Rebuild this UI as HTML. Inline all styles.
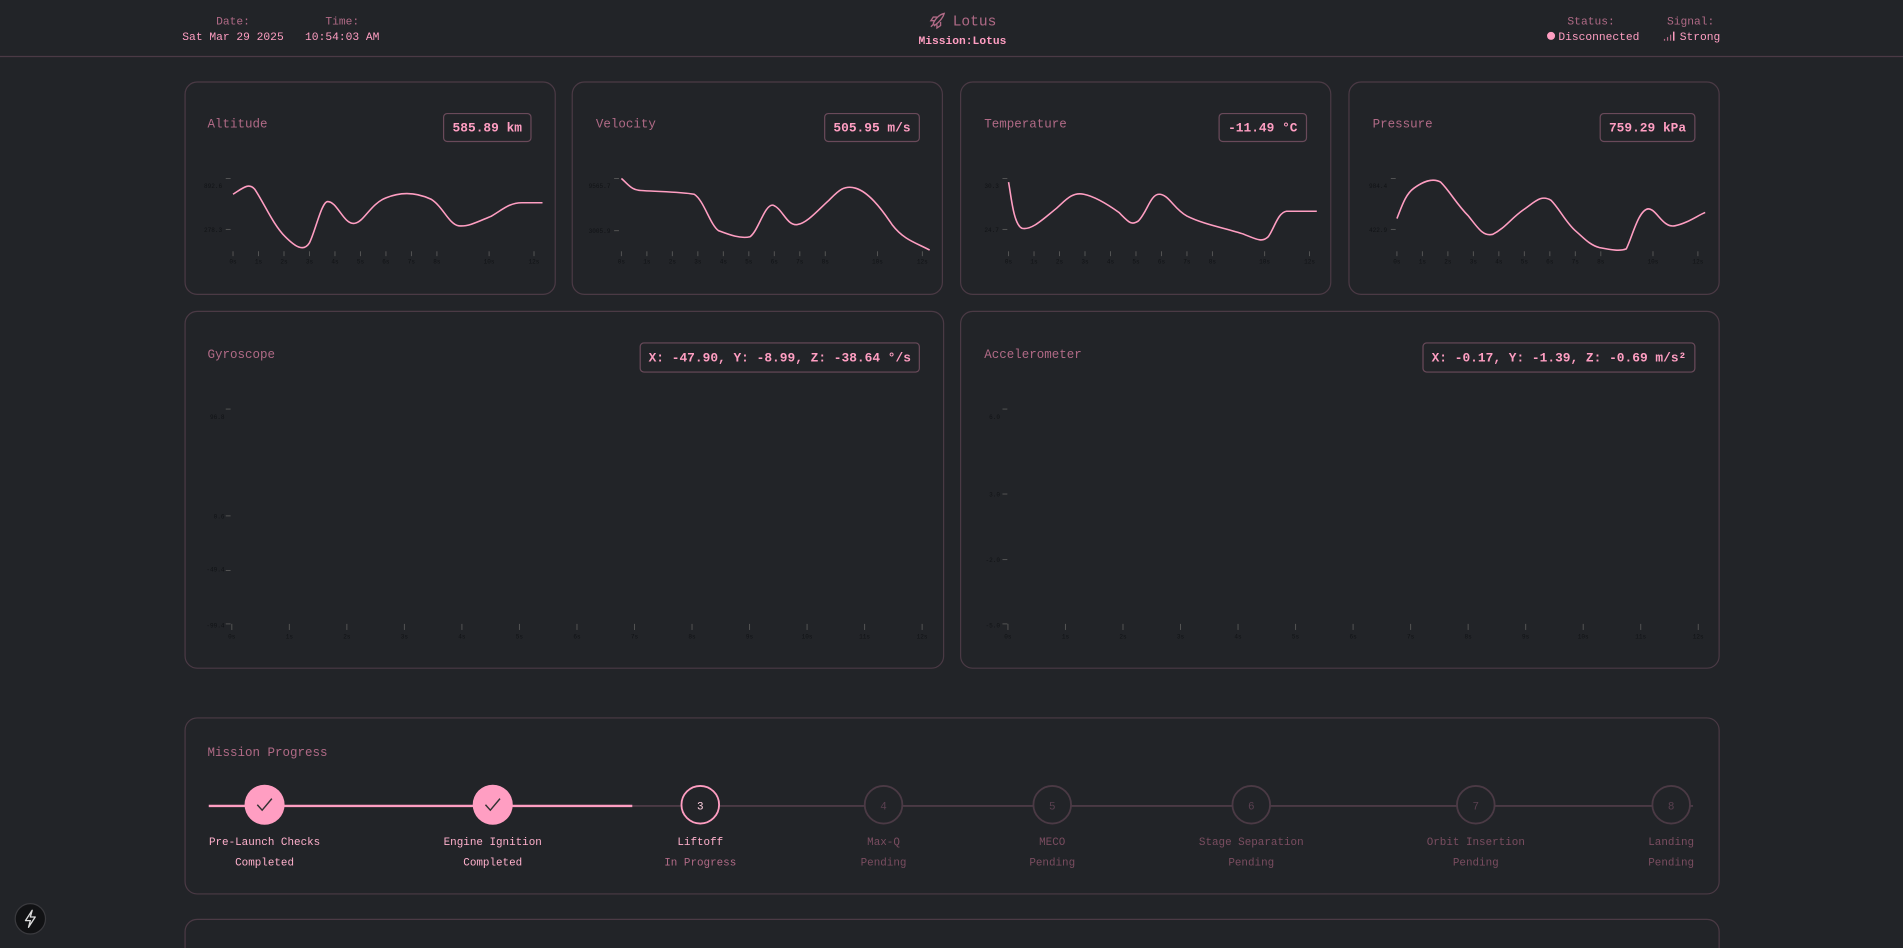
<!DOCTYPE html>
<html><head><meta charset="utf-8">
<style>
html,body{margin:0;padding:0;background:#222428;width:1903px;height:948px;overflow:hidden}
svg{display:block}
text{font-family:"Liberation Mono","DejaVu Sans Mono",monospace}
.lbl{fill:#b06a86;font-size:9.3px}
.val{fill:#ff9ec2;font-size:9.3px}
.card{fill:none;stroke:#4b3a45;stroke-width:1}
.title{fill:#b06a86;font-size:10.3px}
.box{fill:none;stroke:#6a4a5a;stroke-width:1}
.bv{fill:#ff9ec2;font-size:10.6px;font-weight:bold}
.ax{fill:#111316;font-size:5px}
.tk{stroke:#555;stroke-width:0.8}
.ln{fill:none;stroke:#ff9ec2;stroke-width:1.3}
.st{font-size:9px;text-anchor:middle}
</style></head><body>
<svg width="1903" height="948" viewBox="0 0 1568 781" xmlns="http://www.w3.org/2000/svg">
<rect width="1568" height="781" fill="#222428"/>
<!-- header -->
<text class="lbl" x="192" y="20" text-anchor="middle">Date:</text>
<text class="val" x="192" y="33" text-anchor="middle">Sat Mar 29 2025</text>
<text class="lbl" x="282" y="20" text-anchor="middle">Time:</text>
<text class="val" x="282" y="33" text-anchor="middle">10:54:03 AM</text>
<g transform="translate(766,10)" fill="none" stroke="#b06a86" stroke-width="1.1">
<path d="M3,9 C5,5 8,2 12,1 C11,5 8,8 4,11 Z"/><path d="M4,7 L1,7 L3,4 L6,4"/><path d="M6,10 L6,13 L9,11 L9,8"/><path d="M3,10 L1,12"/>
</g>
<text x="785" y="21" fill="#b06a86" font-size="12">Lotus</text>
<text class="val" x="793" y="36" text-anchor="middle" font-weight="bold">Mission:Lotus</text>
<text class="lbl" x="1311" y="20" text-anchor="middle">Status:</text>
<circle cx="1278" cy="29.5" r="3.3" fill="#ff9ec2"/>
<text class="val" x="1284" y="33">Disconnected</text>
<text class="lbl" x="1393" y="20" text-anchor="middle">Signal:</text>
<g fill="#b06a86"><rect x="1371" y="32" width="1" height="1.5"/><rect x="1373.5" y="30.5" width="1" height="3"/><rect x="1376" y="28.5" width="1" height="5"/><rect x="1378.5" y="26" width="1.2" height="7.5" fill="#ff9ec2"/></g>
<text class="val" x="1384" y="33">Strong</text>
<line x1="0" y1="46.5" x2="1568" y2="46.5" stroke="#4b3a45"/>

<!-- row 1 cards -->
<g id="c1">
<rect class="card" x="152.5" y="67.5" width="305" height="175" rx="10"/>
<text class="title" x="171" y="105">Altitude</text>
<rect class="box" x="365.5" y="93.5" width="72" height="23" rx="3"/>
<text class="bv" x="401.5" y="108.5" text-anchor="middle">585.89 km</text>
<line class="tk" x1="186" y1="147" x2="190" y2="147"/>
<text class="ax" x="183" y="155" text-anchor="end">892.6</text><line class="tk" x1="186" y1="189" x2="190" y2="189"/>
<text class="ax" x="183" y="191" text-anchor="end">278.3</text>
<path class="ln" d="M192,160 C200,155 205,150 210,156 C218,168 225,185 235,195 C243,203 250,208 255,200 C260,190 265,166 270,166 C278,166 283,185 292,184 C300,183 305,168 318,163 C330,158 342,158 355,164 C365,170 370,185 378,186 C386,187 395,182 405,178 C415,172 420,167 430,167 L447,167"/>
</g>
<rect class="card" x="471.5" y="67.5" width="305" height="175" rx="10"/>
<text class="title" x="491" y="105">Velocity</text>
<rect class="box" x="679.5" y="93.5" width="78" height="23" rx="3"/>
<text class="bv" x="718.5" y="108.5" text-anchor="middle">505.95 m/s</text>
<line class="tk" x1="506" y1="147" x2="510" y2="147"/>
<text class="ax" x="503" y="155" text-anchor="end">9565.7</text><line class="tk" x1="506" y1="190" x2="510" y2="190"/>
<text class="ax" x="503" y="192" text-anchor="end">3005.9</text>
<path class="ln" d="M512,147 C518,152 520,157 530,157 C545,158 560,158 572,160 C580,165 585,185 592,190 C600,193 610,197 618,195 C625,190 630,168 637,169 C645,172 648,186 657,185 C665,184 675,172 683,165 C690,158 695,152 705,155 C715,158 725,170 735,185 C745,198 755,200 766,206"/>

<rect class="card" x="791.5" y="67.5" width="305" height="175" rx="10"/>
<text class="title" x="811" y="105">Temperature</text>
<rect class="box" x="1004.5" y="93.5" width="72" height="23" rx="3"/>
<text class="bv" x="1040.5" y="108.5" text-anchor="middle">-11.49 °C</text>
<line class="tk" x1="826" y1="147" x2="830" y2="147"/>
<text class="ax" x="823" y="155" text-anchor="end">30.3</text><line class="tk" x1="826" y1="189" x2="830" y2="189"/>
<text class="ax" x="823" y="191" text-anchor="end">24.7</text>
<path class="ln" d="M831,150 C833,160 835,185 842,188 C850,190 860,180 870,172 C878,165 883,158 893,160 C903,162 915,170 922,175 C930,183 932,186 938,182 C945,175 948,160 955,160 C963,160 967,172 978,178 C992,185 1010,188 1025,193 C1035,197 1040,200 1045,195 C1050,188 1053,175 1060,174 L1085,174"/>

<rect class="card" x="1111.5" y="67.5" width="305" height="175" rx="10"/>
<text class="title" x="1131" y="105">Pressure</text>
<rect class="box" x="1318.5" y="93.5" width="78" height="23" rx="3"/>
<text class="bv" x="1357.5" y="108.5" text-anchor="middle">759.29 kPa</text>
<line class="tk" x1="1146" y1="147" x2="1150" y2="147"/>
<text class="ax" x="1143" y="155" text-anchor="end">984.4</text><line class="tk" x1="1146" y1="189" x2="1150" y2="189"/>
<text class="ax" x="1143" y="191" text-anchor="end">422.9</text>
<path class="ln" d="M1151,180 C1155,170 1158,160 1165,155 C1172,150 1180,146 1187,150 C1195,158 1200,168 1210,178 C1218,188 1222,195 1230,193 C1240,188 1245,180 1255,173 C1265,166 1270,160 1278,165 C1285,172 1290,183 1298,190 C1305,196 1310,202 1318,204 C1328,206 1335,207 1340,205 C1345,195 1350,173 1358,172 C1365,172 1370,188 1380,186 C1390,184 1398,178 1405,175"/>

<!-- small chart x axes -->
<g id="xa">
<g class="tk">
<line x1="192" y1="207" x2="192" y2="211"/><line x1="213" y1="207" x2="213" y2="211"/><line x1="234" y1="207" x2="234" y2="211"/><line x1="255" y1="207" x2="255" y2="211"/><line x1="276" y1="207" x2="276" y2="211"/><line x1="297" y1="207" x2="297" y2="211"/><line x1="318" y1="207" x2="318" y2="211"/><line x1="339" y1="207" x2="339" y2="211"/><line x1="360" y1="207" x2="360" y2="211"/><line x1="403" y1="207" x2="403" y2="211"/><line x1="440" y1="207" x2="440" y2="211"/>
</g>
<g class="ax" text-anchor="middle">
<text x="192" y="217">0s</text><text x="213" y="217">1s</text><text x="234" y="217">2s</text><text x="255" y="217">3s</text><text x="276" y="217">4s</text><text x="297" y="217">5s</text><text x="318" y="217">6s</text><text x="339" y="217">7s</text><text x="360" y="217">8s</text><text x="403" y="217">10s</text><text x="440" y="217">12s</text>
</g>
</g>
<use href="#xa" x="320"/><use href="#xa" x="639"/><use href="#xa" x="959"/>

<!-- row 2 -->
<rect class="card" x="152.5" y="256.5" width="625" height="294" rx="10"/>
<text class="title" x="171" y="295">Gyroscope</text>
<rect class="box" x="527.5" y="282.5" width="230" height="24" rx="3"/>
<text class="bv" x="642.5" y="298" text-anchor="middle" font-size="10.2">X: -47.90, Y: -8.99, Z: -38.64 °/s</text>
<g class="tk"><line x1="186" y1="337" x2="190" y2="337"/><line x1="186" y1="425" x2="190" y2="425"/><line x1="186" y1="470" x2="190" y2="470"/><line x1="186" y1="514" x2="190" y2="514"/></g>
<g class="ax" text-anchor="end"><text x="185" y="345">96.8</text><text x="185" y="427">0.6</text><text x="185" y="471">-49.4</text><text x="185" y="517">-99.4</text></g>
<g id="gx">
<g class="tk"><line x1="191" y1="514" x2="191" y2="519"/><line x1="238.4" y1="514" x2="238.4" y2="519"/><line x1="285.8" y1="514" x2="285.8" y2="519"/><line x1="333.2" y1="514" x2="333.2" y2="519"/><line x1="380.6" y1="514" x2="380.6" y2="519"/><line x1="428" y1="514" x2="428" y2="519"/><line x1="475.4" y1="514" x2="475.4" y2="519"/><line x1="522.8" y1="514" x2="522.8" y2="519"/><line x1="570.2" y1="514" x2="570.2" y2="519"/><line x1="617.6" y1="514" x2="617.6" y2="519"/><line x1="665" y1="514" x2="665" y2="519"/><line x1="712.4" y1="514" x2="712.4" y2="519"/><line x1="759.8" y1="514" x2="759.8" y2="519"/></g>
<g class="ax" text-anchor="middle"><text x="191" y="526">0s</text><text x="238.4" y="526">1s</text><text x="285.8" y="526">2s</text><text x="333.2" y="526">3s</text><text x="380.6" y="526">4s</text><text x="428" y="526">5s</text><text x="475.4" y="526">6s</text><text x="522.8" y="526">7s</text><text x="570.2" y="526">8s</text><text x="617.6" y="526">9s</text><text x="665" y="526">10s</text><text x="712.4" y="526">11s</text><text x="759.8" y="526">12s</text></g>
</g>

<rect class="card" x="791.5" y="256.5" width="625" height="294" rx="10"/>
<text class="title" x="811" y="295">Accelerometer</text>
<rect class="box" x="1172.5" y="282.5" width="224" height="24" rx="3"/>
<text class="bv" x="1284.5" y="298" text-anchor="middle" font-size="10.2">X: -0.17, Y: -1.39, Z: -0.69 m/s²</text>
<g class="tk"><line x1="826" y1="337" x2="830" y2="337"/><line x1="826" y1="407" x2="830" y2="407"/><line x1="826" y1="461" x2="830" y2="461"/><line x1="826" y1="514" x2="830" y2="514"/></g>
<g class="ax" text-anchor="end"><text x="824" y="345">6.0</text><text x="824" y="409">3.0</text><text x="824" y="463">-2.0</text><text x="824" y="517">-5.0</text></g>
<use href="#gx" x="639.5"/>

<!-- mission progress -->
<rect class="card" x="152.5" y="591.5" width="1264" height="145" rx="10"/>
<text class="title" x="171" y="623">Mission Progress</text>
<line x1="521" y1="664" x2="1395" y2="664" stroke="#4b3a45" stroke-width="1.5"/>
<line x1="172" y1="664" x2="521" y2="664" stroke="#ff9ec2" stroke-width="2"/>
<circle cx="218" cy="663" r="16.5" fill="#ff9ec2"/>
<path d="M212,663 L216,667.5 L224,658" fill="none" stroke="#333" stroke-width="1.2"/>
<circle cx="406" cy="663" r="16.5" fill="#ff9ec2"/>
<path d="M400,663 L404,667.5 L412,658" fill="none" stroke="#333" stroke-width="1.2"/>
<circle cx="577" cy="663" r="15.5" fill="#222428" stroke="#ff9ec2" stroke-width="1.5"/>
<text x="577" y="667" class="st" fill="#ffd0e0" font-size="10">3</text>
<g fill="#222428" stroke="#4b3a45" stroke-width="1.5">
<circle cx="728" cy="663" r="15.5"/><circle cx="867" cy="663" r="15.5"/><circle cx="1031" cy="663" r="15.5"/><circle cx="1216" cy="663" r="15.5"/><circle cx="1377" cy="663" r="15.5"/>
</g>
<g class="st" fill="#5a4050" font-size="10">
<text x="728" y="667">4</text><text x="867" y="667">5</text><text x="1031" y="667">6</text><text x="1216" y="667">7</text><text x="1377" y="667">8</text>
</g>
<g class="st" fill="#ffb0cc">
<text x="218" y="696">Pre-Launch Checks</text><text x="218" y="713">Completed</text>
<text x="406" y="696">Engine Ignition</text><text x="406" y="713">Completed</text>
<text x="577" y="696">Liftoff</text>
</g>
<text x="577" y="713" class="st" fill="#b06a86">In Progress</text>
<g class="st" fill="#7a4d60">
<text x="728" y="696">Max-Q</text><text x="728" y="713">Pending</text>
<text x="867" y="696">MECO</text><text x="867" y="713">Pending</text>
<text x="1031" y="696">Stage Separation</text><text x="1031" y="713">Pending</text>
<text x="1216" y="696">Orbit Insertion</text><text x="1216" y="713">Pending</text>
<text x="1377" y="696">Landing</text><text x="1377" y="713">Pending</text>
</g>

<rect class="card" x="152.5" y="757.5" width="1264" height="60" rx="10"/>

<!-- bottom-left badge -->
<circle cx="25" cy="757" r="12.5" fill="#111214" stroke="#3a3a3e"/>
<path d="M26.5,750 L21,758.5 L25,758.5 L23.5,764 L29,755.5 L25,755.5 Z" fill="none" stroke="#ddd" stroke-width="1.1" stroke-linejoin="round"/>
</svg>
</body></html>
